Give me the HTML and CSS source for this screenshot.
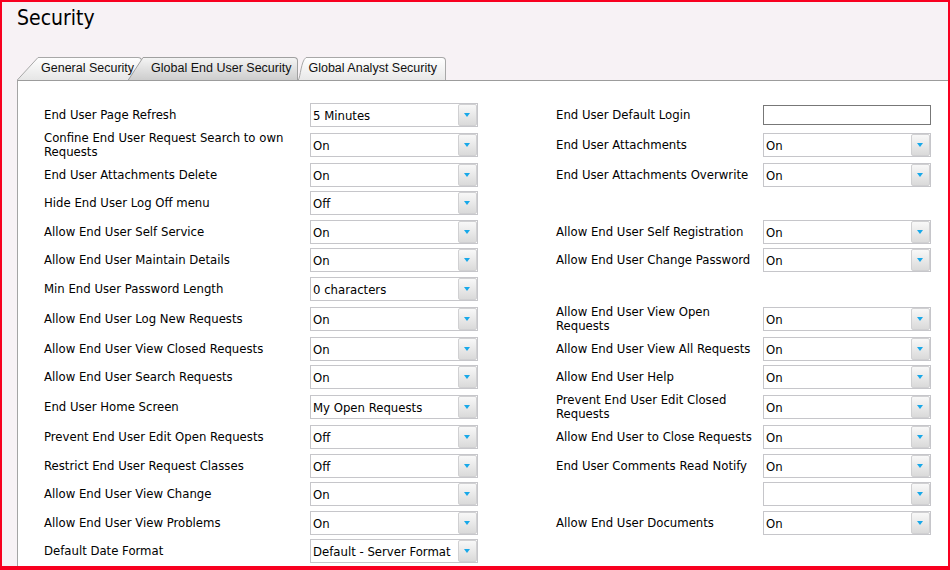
FILE: index.html
```html
<!DOCTYPE html>
<html lang="en">
<head>
<meta charset="utf-8">
<title>Security</title>
<link rel="stylesheet" href="styles.css">
</head>
<body>
<div class="page">
  <h1 class="title">Security</h1>
  <div class="tabs">
    <div class="tab t1">
      <svg class="slant" width="21" height="23" viewBox="0 0 21 23">
        <defs><linearGradient id="g1" x1="0" y1="0" x2="0" y2="1"><stop offset="0" stop-color="#fefefe"/><stop offset="1" stop-color="#e6e6e6"/></linearGradient></defs>
        <polygon points="0,23 21,0.5 21,23" fill="url(#g1)"/>
        <line x1="0.3" y1="23" x2="21" y2="0.5" stroke="#a8a8a8" stroke-width="1"/>
      </svg>
      <span>General Security</span>
    </div>
    <div class="tab t2">
      <svg class="slant" width="15" height="23" viewBox="0 0 15 23">
        <defs><linearGradient id="g2" x1="0" y1="0" x2="0" y2="1"><stop offset="0" stop-color="#f4f4f4"/><stop offset="1" stop-color="#cdcdcd"/></linearGradient></defs>
        <polygon points="0,23 15,0.5 15,23" fill="url(#g2)"/>
        <line x1="0.3" y1="23" x2="15" y2="0.5" stroke="#a0a0a0" stroke-width="1"/>
      </svg>
      <span>Global End User Security</span>
    </div>
    <div class="tab t3">
      <svg class="slant" width="8" height="23" viewBox="0 0 8 23">
        <defs><linearGradient id="g3" x1="0" y1="0" x2="0" y2="1"><stop offset="0" stop-color="#ffffff"/><stop offset="1" stop-color="#e8e8e8"/></linearGradient></defs>
        <path d="M0,23 C2.5,20 3,4 8,0.5 L8,23 Z" fill="url(#g3)"/>
        <path d="M0.3,23 C2.5,20 3,4 8,0.5" fill="none" stroke="#a8a8a8" stroke-width="1"/>
      </svg>
      <span>Global Analyst Security</span>
    </div>
  </div>
  <div class="panel">
    <div class="form">
      <div class="lbl">End User Page Refresh</div>
      <div class="sel"><span class="val">5 Minutes</span><span class="btn"></span></div>
      <div class="lbl r">End User Default Login</div>
      <div class="txt"></div>

      <div class="lbl">Confine End User Request Search to own Requests</div>
      <div class="sel"><span class="val">On</span><span class="btn"></span></div>
      <div class="lbl r">End User Attachments</div>
      <div class="sel"><span class="val">On</span><span class="btn"></span></div>

      <div class="lbl">End User Attachments Delete</div>
      <div class="sel"><span class="val">On</span><span class="btn"></span></div>
      <div class="lbl r">End User Attachments Overwrite</div>
      <div class="sel"><span class="val">On</span><span class="btn"></span></div>

      <div class="lbl">Hide End User Log Off menu</div>
      <div class="sel"><span class="val">Off</span><span class="btn"></span></div>
      <div class="lbl r"></div>
      <div></div>

      <div class="lbl">Allow End User Self Service</div>
      <div class="sel"><span class="val">On</span><span class="btn"></span></div>
      <div class="lbl r">Allow End User Self Registration</div>
      <div class="sel"><span class="val">On</span><span class="btn"></span></div>

      <div class="lbl">Allow End User Maintain Details</div>
      <div class="sel"><span class="val">On</span><span class="btn"></span></div>
      <div class="lbl r">Allow End User Change Password</div>
      <div class="sel"><span class="val">On</span><span class="btn"></span></div>

      <div class="lbl">Min End User Password Length</div>
      <div class="sel"><span class="val">0 characters</span><span class="btn"></span></div>
      <div class="lbl r"></div>
      <div></div>

      <div class="lbl">Allow End User Log New Requests</div>
      <div class="sel"><span class="val">On</span><span class="btn"></span></div>
      <div class="lbl r">Allow End User View Open Requests</div>
      <div class="sel"><span class="val">On</span><span class="btn"></span></div>

      <div class="lbl">Allow End User View Closed Requests</div>
      <div class="sel"><span class="val">On</span><span class="btn"></span></div>
      <div class="lbl r">Allow End User View All Requests</div>
      <div class="sel"><span class="val">On</span><span class="btn"></span></div>

      <div class="lbl">Allow End User Search Requests</div>
      <div class="sel"><span class="val">On</span><span class="btn"></span></div>
      <div class="lbl r">Allow End User Help</div>
      <div class="sel"><span class="val">On</span><span class="btn"></span></div>

      <div class="lbl">End User Home Screen</div>
      <div class="sel"><span class="val">My Open Requests</span><span class="btn"></span></div>
      <div class="lbl r">Prevent End User Edit Closed Requests</div>
      <div class="sel"><span class="val">On</span><span class="btn"></span></div>

      <div class="lbl">Prevent End User Edit Open Requests</div>
      <div class="sel"><span class="val">Off</span><span class="btn"></span></div>
      <div class="lbl r">Allow End User to Close Requests</div>
      <div class="sel"><span class="val">On</span><span class="btn"></span></div>

      <div class="lbl">Restrict End User Request Classes</div>
      <div class="sel"><span class="val">Off</span><span class="btn"></span></div>
      <div class="lbl r">End User Comments Read Notify</div>
      <div class="sel"><span class="val">On</span><span class="btn"></span></div>

      <div class="lbl">Allow End User View Change</div>
      <div class="sel"><span class="val">On</span><span class="btn"></span></div>
      <div class="lbl r"></div>
      <div class="sel"><span class="val"></span><span class="btn"></span></div>

      <div class="lbl">Allow End User View Problems</div>
      <div class="sel"><span class="val">On</span><span class="btn"></span></div>
      <div class="lbl r">Allow End User Documents</div>
      <div class="sel"><span class="val">On</span><span class="btn"></span></div>

      <div class="lbl">Default Date Format</div>
      <div class="sel"><span class="val">Default - Server Format</span><span class="btn"></span></div>
      <div class="lbl r"></div>
      <div></div>
    </div>
  </div>
</div>
</body>
</html>
```
FILE: styles.css
```css
html, body {
  margin: 0;
  padding: 0;
}
body {
  background: #f7f2f5;
}
.page {
  box-sizing: border-box;
  height: 570px;
  border: 2px solid #f80020;
  border-bottom-width: 4px;
  background: #f7f2f5;
  padding-left: 15px;
  overflow: hidden;
}
.title {
  margin: 4px 0 0 0;
  font-family: "DejaVu Sans Condensed", "DejaVu Sans", sans-serif;
  font-stretch: condensed;
  font-weight: normal;
  font-size: 21px;
  line-height: 25px;
  color: #000;
}
.tabs {
  display: flex;
  align-items: flex-end;
  margin-top: 26px;
  height: 23px;
  font-family: "Liberation Sans", Arial, sans-serif;
  font-size: 12.5px;
  color: #111;
}
.tab {
  position: relative;
  box-sizing: border-box;
  height: 23px;
  border-top: 1px solid #a8a8a8;
  border-right: 1px solid #a8a8a8;
  border-top-right-radius: 4px;
  line-height: 20px;
  white-space: nowrap;
}
.tab .slant {
  position: absolute;
  top: -1px;
  display: block;
}
.tab span {
  position: relative;
}
.t1 {
  margin-left: 21px;
  padding: 0 7px 0 3px;
  background: linear-gradient(#fefefe, #e6e6e6);
  z-index: 1;
}
.t1 .slant { left: -21px; }
.t2 {
  margin-left: 1px;
  padding: 0 6px 0 8px;
  background: linear-gradient(#f4f4f4, #cdcdcd);
  border-color: #a0a0a0;
  z-index: 2;
}
.t2 .slant { left: -15px; }
.t3 {
  margin-left: 8px;
  padding: 0 8px 0 2px;
  background: linear-gradient(#ffffff, #e8e8e8);
  z-index: 1;
}
.t3 .slant { left: -8px; }
.panel {
  background: #fff;
  border-top: 1px solid #9c9c9c;
  border-left: 1px solid #a4a4a4;
  padding: 19.5px 0 0 26px;
  height: 600px;
}
.form {
  display: grid;
  grid-template-columns: 266px 168px 285px 168px;
  align-items: center;
  font-family: "DejaVu Sans Condensed", "DejaVu Sans", sans-serif;
  font-stretch: condensed;
  font-size: 13px;
  color: #000;
}
.lbl {
  padding: 1.75px 8px 1.75px 0;
  line-height: 14px;
}
.lbl.r {
  padding-left: 78px;
  padding-right: 6px;
}
.sel {
  box-sizing: border-box;
  display: flex;
  height: 24px;
  margin: 2.25px 0;
  border: 1px solid #c6c6ca;
  background: #fff;
}
.sel .val {
  flex: 1;
  padding: 1px 0 0 2px;
  line-height: 21px;
  white-space: nowrap;
  overflow: hidden;
}
.sel .btn {
  box-sizing: border-box;
  position: relative;
  width: 19px;
  height: 22px;
  border: 1px solid #d0d0d2;
  border-radius: 2px;
  background: linear-gradient(#f8f8f8, #dadada);
}
.sel .btn::after {
  content: "";
  position: absolute;
  left: 5px;
  top: 8px;
  border-left: 3.5px solid transparent;
  border-right: 3.5px solid transparent;
  border-top: 4px solid #17a8e9;
}
.txt {
  box-sizing: border-box;
  height: 20px;
  border: 1px solid #777;
  background: #fff;
}
```
